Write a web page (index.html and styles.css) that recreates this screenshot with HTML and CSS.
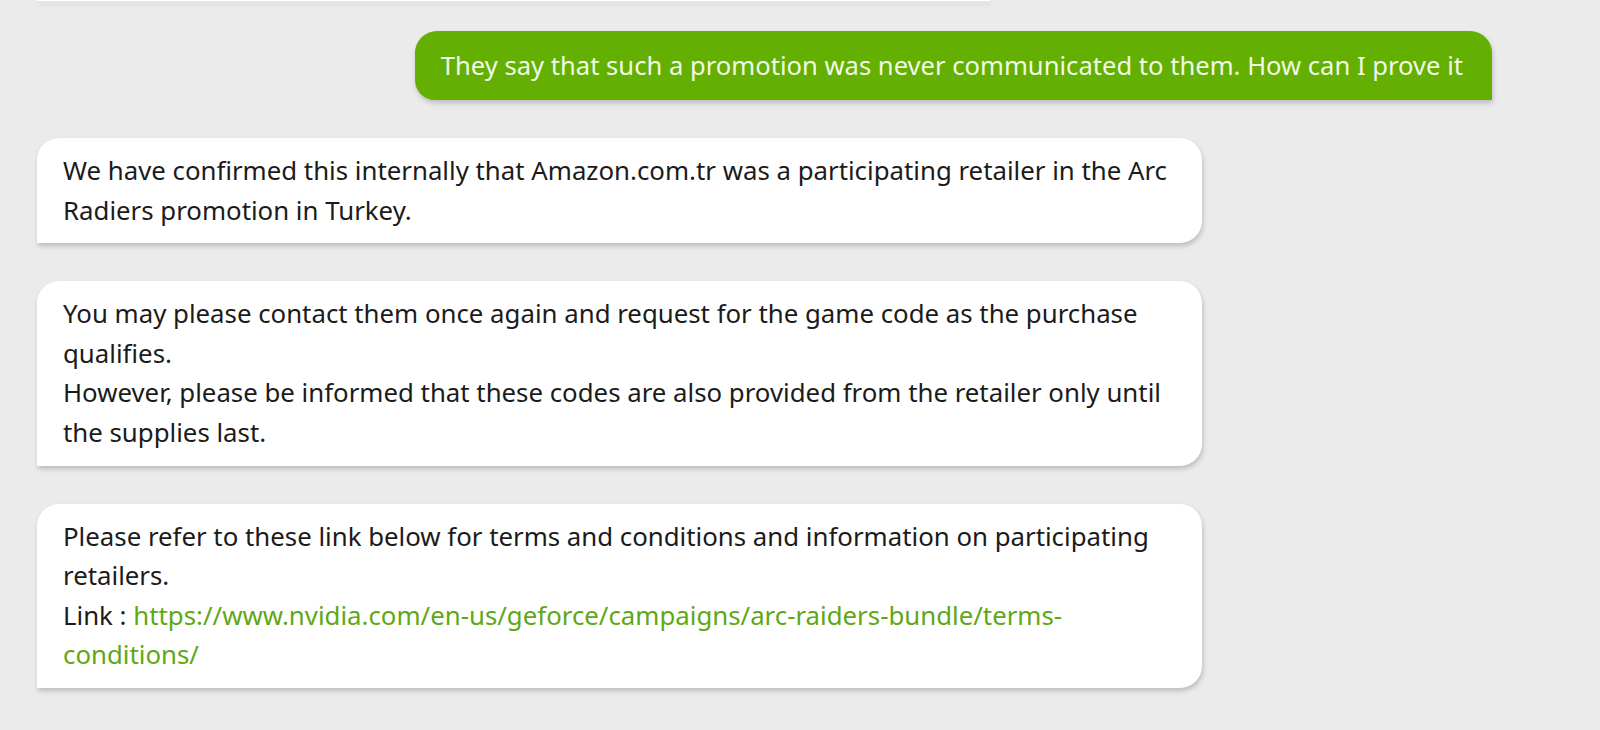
FILE: index.html
```html
<!DOCTYPE html>
<html lang="en">
<head>
<meta charset="utf-8">
<title>Chat</title>
<link rel="stylesheet" href="styles.css">
</head>
<body>
<main class="chat">
  <div class="msg bot stub"></div>
  <div class="msg user">They say that such a promotion was never communicated to them. How can I prove it</div>
  <div class="msg bot">We have confirmed this internally that Amazon.com.tr was a participating retailer in the Arc Radiers promotion in Turkey.</div>
  <div class="msg bot">You may please contact them once again and request for the game code as the purchase qualifies.<br>However, please be informed that these codes are also provided from the retailer only until the supplies last.</div>
  <div class="msg bot">Please refer to these link below for terms and conditions and information on participating retailers.<br>Link : <a class="link" href="#">https://www.nvidia.com/en-us/geforce/campaigns/arc-raiders-bundle/terms-conditions/</a></div>
</main>
</body>
</html>
```
FILE: styles.css
```css
html, body {
  margin: 0;
  padding: 0;
  background: #ebebeb;
  height: 100%;
  overflow: hidden;
}
.chat {
  display: flex;
  flex-direction: column;
  gap: 38px;
  font-family: "Noto Sans", sans-serif;
}
.msg {
  box-sizing: border-box;
  box-shadow: 1px 3px 5px rgba(0, 0, 0, 0.2);
}
.bot {
  margin-left: 37px;
  width: 1165px;
  background: #ffffff;
  color: #1b1b1b;
  font-size: 25.8px;
  line-height: 39.6px;
  padding: 13px 26px;
  border-radius: 22px 22px 22px 0;
}
.stub {
  width: 953px;
  height: 1px;
  padding: 0;
  border-radius: 0;
  margin-bottom: -8px;
}
.user {
  align-self: flex-end;
  margin-right: 108px;
  background: #63b002;
  color: #f1f8e6;
  font-size: 25.6px;
  line-height: 39px;
  padding: 15px 29px 15px 26px;
  border-radius: 22px 22px 0 20px;
}
.link {
  color: #5fa815;
  text-decoration: none;
}
```
